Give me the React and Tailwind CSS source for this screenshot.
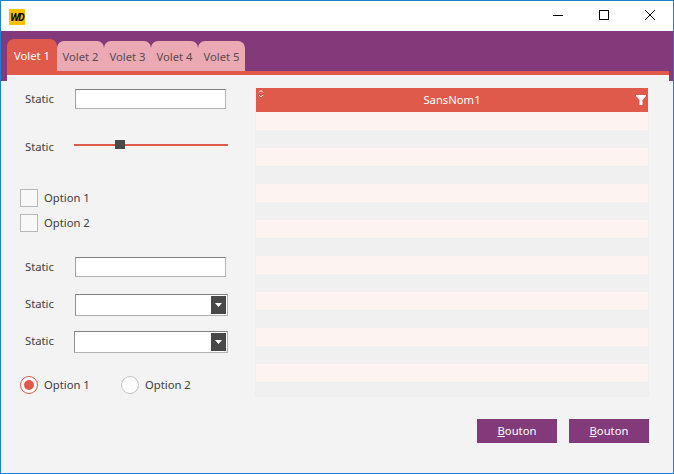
const font = { fontFamily: '"Noto Sans", sans-serif' };
const rows = Array.from({ length: 16 }, (_, i) => i);

function Tab({ label, active }) {
  if (active) {
    return (
      <div className="w-[50px] h-[32px] pt-[3px] rounded-t-[7px] bg-[#e05a4b] text-white flex items-center justify-center text-[11.25px]">
        {label}
      </div>
    );
  }
  return (
    <div className="w-[47px] h-[30px] pt-[3px] rounded-t-[7px] bg-[#eba9b4] text-[#5a4a52] flex items-center justify-center text-[11.25px]">
      {label}
    </div>
  );
}

function Input() {
  return (
    <div className="w-[151px] h-[20px] bg-white border border-[#b4b4b4] border-t-[#808080] border-l-[#a0a0a0]" />
  );
}

function Combo({ wide }) {
  return (
    <div className={`${wide ? "w-[154px] -ml-[1px]" : "w-[153px]"} h-[22px] bg-white border border-[#b4b4b4] border-t-[#808080] border-l-[#909090] flex justify-end items-center pr-[1px]`}>
      <div className="w-[15px] h-[18px] bg-[#484848] flex items-center justify-center">
        <svg width="7" height="4" viewBox="0 0 7 4">
          <path d="M0 0h7L3.5 4z" fill="#fff" />
        </svg>
      </div>
    </div>
  );
}

function Field({ className, children }) {
  return (
    <div className={`flex items-center ml-[5px] ${className}`}>
      <span className="w-[50px] text-[11.25px] leading-[16px] text-[#404040]">Static</span>
      {children}
    </div>
  );
}

function ComboField({ className, wide }) {
  return (
    <div className={`flex items-start ml-[5px] ${className}`}>
      <span className="w-[50px] mt-[2px] text-[11.25px] leading-[16px] text-[#404040]">Static</span>
      <Combo wide={wide} />
    </div>
  );
}

function Check({ label, className }) {
  return (
    <label className={`flex items-center gap-[6px] text-[11.25px] text-[#404040] ${className}`}>
      <span className="w-[18px] h-[18px] bg-[#f8f8f8] border border-[#b8b8b8]" />
      {label}
    </label>
  );
}

function Button() {
  return (
    <button className="w-[80px] h-[24px] bg-[#823a7a] text-white text-[11.25px] flex items-center justify-center">
      <span><span className="underline">B</span>outon</span>
    </button>
  );
}

function App() {
  return (
    <div style={font} className="w-[674px] h-[474px] bg-[#f3f3f3] border border-[#1b80d4] flex flex-col overflow-hidden">
      {/* title bar */}
      <div className="h-[30px] bg-white flex items-center">
        <div className="ml-[8px] mt-[1px] w-[16px] h-[16px] bg-[#ffc000] flex items-center justify-center text-[10px] leading-none font-bold italic tracking-[-1px] text-black">
          WD
        </div>
        <div className="ml-auto flex items-center text-black">
          <svg width="46" height="30" viewBox="0 0 46 30" fill="none" stroke="#000">
            <path d="M18 14.5h10" />
          </svg>
          <svg width="46" height="30" viewBox="0 0 46 30" fill="none" stroke="#000">
            <rect x="18.5" y="9.5" width="9" height="9" />
          </svg>
          <svg width="46" height="30" viewBox="0 0 46 30" fill="none" stroke="#000">
            <path d="M18 9l10 10M28 9L18 19" />
          </svg>
        </div>
      </div>

      {/* purple band with the tabs */}
      <div className="h-[50px] bg-[#823a7a] pl-[6px] pr-[4px] flex flex-col justify-end">
        <div className="flex items-end">
          <Tab label="Volet 1" active />
          <Tab label="Volet 2" />
          <Tab label="Volet 3" />
          <Tab label="Volet 4" />
          <Tab label="Volet 5" />
        </div>
        <div className="h-[4px] bg-[#e05a4b]" />
        <div className="h-[6px] bg-[#f3f3f3]" />
      </div>

      {/* body */}
      <div className="flex-1 flex">
        <div className="w-[254px] pl-[19px] pt-[8px] flex flex-col items-start">
          <Field><Input /></Field>
          <Field className="mt-[30px]">
            <div className="relative w-[154px] h-[10px] -ml-[1px] -mt-[4px] flex items-center">
              <div className="w-full h-[2px] bg-[#e05a4b]" />
              <div className="absolute left-[41px] top-0 w-[10px] h-[9px] bg-[#484848]" />
            </div>
          </Field>
          <Check label="Option 1" className="mt-[34px]" />
          <Check label="Option 2" className="mt-[7px]" />
          <Field className="mt-[25px]"><Input /></Field>
          <ComboField className="mt-[17px]" />
          <ComboField className="mt-[15px]" wide />
          <div className="flex items-center mt-[23px] text-[11.25px] text-[#404040]">
            <span className="w-[18px] h-[18px] rounded-full border border-[#e05a4b] bg-white flex items-center justify-center">
              <span className="w-[10px] h-[10px] rounded-full bg-[#e05a4b]" />
            </span>
            <span className="ml-[6px] w-[77px]">Option 1</span>
            <span className="w-[18px] h-[18px] rounded-full border border-[#c4c4c4] bg-white" />
            <span className="ml-[6px]">Option 2</span>
          </div>
        </div>

        <div className="w-[394px] flex flex-col items-end">
          <div className="w-[394px] h-[309px] mt-[7px] overflow-hidden flex flex-col border-x border-[#eeeeee]">
            <div className="relative h-[24px] shrink-0 bg-[#e05a4b] text-white text-[11.25px] flex items-center justify-center">
              SansNom1
              <svg width="6" height="8" viewBox="0 0 6 8" fill="none" stroke="#fff" className="absolute left-[2px] top-[2px]">
                <path d="M1 2.5l2-2 2 2M1 5l2 2 2-2" />
              </svg>
              <svg width="10" height="10" viewBox="0 0 10 10" className="absolute right-[2px] top-[7px]">
                <path d="M0 0h10v1L6.5 5v5h-3V5L0 1z" fill="#fff" />
              </svg>
            </div>
            {rows.map((i) => (
              <div key={i} className={`h-[18px] shrink-0 ${i % 2 === 0 ? "bg-[#fdf3f0]" : "bg-[#f0f0f0]"}`} />
            ))}
          </div>
          <div className="flex gap-[12px] mt-[22px]">
            <Button />
            <Button />
          </div>
        </div>
      </div>
    </div>
  );
}

export default App;
